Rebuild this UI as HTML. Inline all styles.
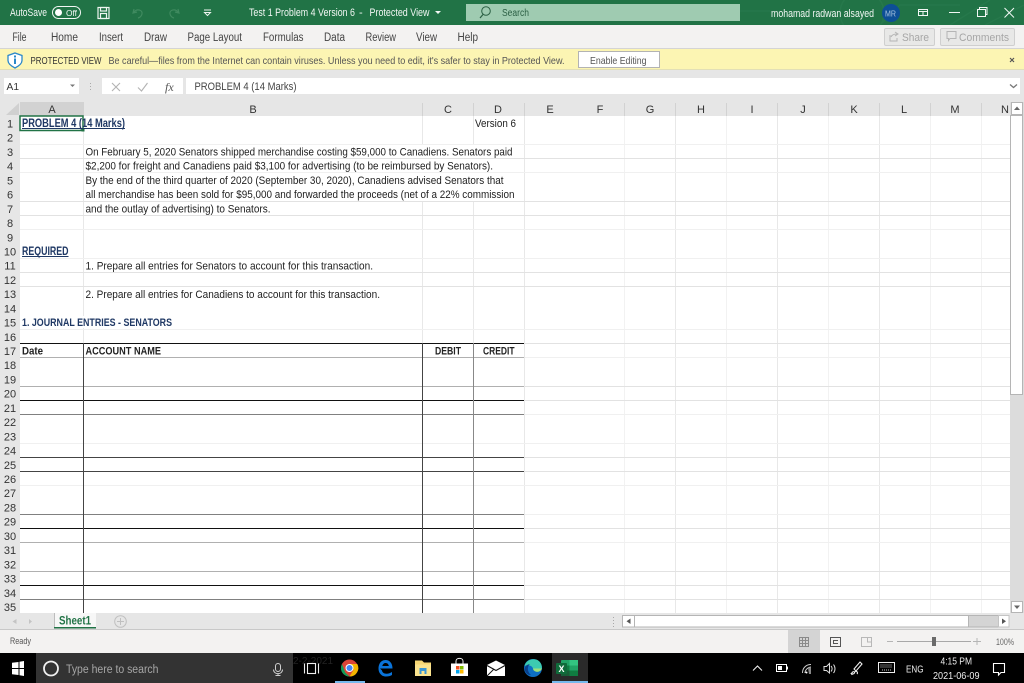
<!DOCTYPE html>
<html><head><meta charset="utf-8"><title>Excel</title>
<style>
html,body{margin:0;padding:0;width:1024px;height:683px;overflow:hidden;background:#fff}
svg{display:block;position:absolute;left:0;top:0;filter:blur(.35px)}
text{font-family:"Liberation Sans",sans-serif;font-size:11px;fill:#333}
.c{font-size:11px;fill:#333;text-anchor:middle}
.r{font-size:11px;fill:#333;text-anchor:middle}
.b{font-weight:bold}
.n{fill:#1f3864}
.k{fill:#222}
.w{fill:#f2f7f4}
</style></head><body>
<svg width="1024" height="683" viewBox="0 0 1024 683" xmlns="http://www.w3.org/2000/svg">
<!-- title bar -->
<rect width="1024" height="25" fill="#217346"/>
<g fill="none" stroke="#26784b" stroke-width="1.5">
<circle cx="862" cy="13" r="22"/><path d="M740 11H770M880 25L900 5H960M950 25L990 0M985 25L1024 5"/>
</g>
<rect x="466" y="4" width="274" height="17" fill="#9fcbb1"/>
<text x="10" y="16" class="w" textLength="37" lengthAdjust="spacingAndGlyphs">AutoSave</text>
<rect x="52.5" y="6.5" width="28" height="12" rx="6" fill="#217346" stroke="#f2f7f4"/>
<circle cx="58.5" cy="12.5" r="3.5" fill="#fff"/>
<text x="66" y="16" style="font-size:8.5px" class="w" textLength="11" lengthAdjust="spacingAndGlyphs">Off</text>
<g fill="none" stroke="#eef5f0" stroke-width="1.2"><rect x="98" y="7.5" width="11" height="11"/><rect x="100.5" y="7.5" width="6" height="3.5"/><rect x="100.5" y="13.5" width="6" height="5"/></g>
<g fill="none" stroke="#3f8a5f" stroke-width="1.2"><path d="M134 9L133 13L137 12M133.500 12.500C137 8 143 10 142 14C141.500 16 140 17.500 138 18"/><path d="M178 9L179 13L175 12M178.500 12.500C175 8 169 10 170 14C170.500 16 172 17.500 174 18"/></g>
<path d="M204 10H211" stroke="#eef5f0"/><path d="M204.500 12.500H210.500L207.500 15.500Z" fill="none" stroke="#eef5f0"/>
<text x="249" y="16" class="w" textLength="106" lengthAdjust="spacingAndGlyphs">Test 1 Problem 4 Version 6</text>
<text x="359" y="16" class="w">-</text>
<text x="369.500" y="16" class="w" textLength="60" lengthAdjust="spacingAndGlyphs">Protected View</text>
<path d="M435 11H441L438 14Z" fill="#f2f7f4"/>
<circle cx="486" cy="11" r="4.300" fill="none" stroke="#2a5f42" stroke-width="1"/><path d="M483 14.500L480 18" stroke="#2a5f42" stroke-width="1.200"/>
<text x="502" y="16" style="fill:#2b5f44;font-size:10px" textLength="27" lengthAdjust="spacingAndGlyphs">Search</text>
<text x="771" y="17" class="w" textLength="103" lengthAdjust="spacingAndGlyphs">mohamad radwan alsayed</text>
<circle cx="891" cy="13" r="9" fill="#0d4f96"/>
<text x="885" y="16.500" style="font-size:8.500px;fill:#a9c4de" textLength="11" lengthAdjust="spacingAndGlyphs">MR</text>
<g fill="none" stroke="#f2f7f4"><rect x="918.500" y="9.500" width="9" height="6"/><path d="M918 11.500H928M923 12V15"/><path d="M949 12.500H960"/><rect x="977.500" y="9.500" width="8" height="7"/><path d="M979.500 9V7.500H987V14.500H986"/><path d="M1004.500 8L1014 17.500M1014 8L1004.500 17.500"/></g>

<!-- ribbon tabs -->
<rect y="25" width="1024" height="24" fill="#f3f2f1"/>
<rect y="48" width="1024" height="1" fill="#d4d4d4"/>
<text x="12.500" y="41" style="fill:#444;font-size:11.500px" textLength="14" lengthAdjust="spacingAndGlyphs">File</text>
<text x="51" y="41" style="fill:#444;font-size:11.500px" textLength="27" lengthAdjust="spacingAndGlyphs">Home</text>
<text x="99" y="41" style="fill:#444;font-size:11.500px" textLength="24" lengthAdjust="spacingAndGlyphs">Insert</text>
<text x="144" y="41" style="fill:#444;font-size:11.500px" textLength="23" lengthAdjust="spacingAndGlyphs">Draw</text>
<text x="187.500" y="41" style="fill:#444;font-size:11.500px" textLength="54.500" lengthAdjust="spacingAndGlyphs">Page Layout</text>
<text x="263" y="41" style="fill:#444;font-size:11.500px" textLength="40.500" lengthAdjust="spacingAndGlyphs">Formulas</text>
<text x="324" y="41" style="fill:#444;font-size:11.500px" textLength="21" lengthAdjust="spacingAndGlyphs">Data</text>
<text x="365.500" y="41" style="fill:#444;font-size:11.500px" textLength="30.500" lengthAdjust="spacingAndGlyphs">Review</text>
<text x="416" y="41" style="fill:#444;font-size:11.500px" textLength="21" lengthAdjust="spacingAndGlyphs">View</text>
<text x="457.500" y="41" style="fill:#444;font-size:11.500px" textLength="20.500" lengthAdjust="spacingAndGlyphs">Help</text>
<rect x="884.500" y="28.500" width="50" height="17" rx="1.500" fill="#e8e8e7" stroke="#cfcfcf"/>
<rect x="940.500" y="28.500" width="74" height="17" rx="1.500" fill="#e8e8e7" stroke="#cfcfcf"/>
<g fill="none" stroke="#b5b5b5"><path d="M890 35V41H897V38M891 37C892 34.500 895 34 897 34M895 32L898 34L895 36"/><path d="M947 31.500H956V38.500H950L948.500 40.500V38.500H947Z"/></g>
<text x="902" y="41" style="fill:#a6a6a6;font-size:11px" textLength="27" lengthAdjust="spacingAndGlyphs">Share</text>
<text x="959" y="41" style="fill:#a6a6a6;font-size:11px" textLength="50" lengthAdjust="spacingAndGlyphs">Comments</text>

<!-- protected view bar -->
<rect y="49" width="1024" height="21" fill="#fcf5b3"/>
<rect y="69" width="1024" height="1" fill="#e2dfb6"/>
<path d="M15 53L22 55.500V60.500C22 63.500 19 66 15 68C11 66 8 63.500 8 60.500V55.500Z" fill="#fff" stroke="#2b88c9" stroke-width="1.300"/>
<rect x="14" y="58.500" width="2" height="5.500" fill="#2b88c9"/><rect x="14" y="55.500" width="2" height="2" fill="#2b88c9"/>
<text x="30.500" y="64" style="fill:#333;font-size:10.500px" textLength="71" lengthAdjust="spacingAndGlyphs">PROTECTED VIEW</text>
<text x="108.500" y="64" style="fill:#555;font-size:10.500px" textLength="456" lengthAdjust="spacingAndGlyphs">Be careful—files from the Internet can contain viruses. Unless you need to edit, it's safer to stay in Protected View.</text>
<rect x="578.500" y="51.500" width="81" height="16" fill="#fff" stroke="#b3b3b3"/>
<text x="590" y="64" style="fill:#555;font-size:10.500px" textLength="56.500" lengthAdjust="spacingAndGlyphs">Enable Editing</text>
<path d="M1010 58L1014 62M1014 58L1010 62" stroke="#555" stroke-width="1.200"/>

<!-- formula bar -->
<rect y="70" width="1024" height="46" fill="#e6e6e6"/>
<rect x="4" y="78" width="75" height="16" fill="#fff"/>
<rect x="102" y="78" width="81" height="16" fill="#fff"/>
<rect x="186" y="78" width="834" height="16" fill="#fff"/>
<text x="6.500" y="90" style="fill:#333;font-size:10.500px" textLength="12.500" lengthAdjust="spacingAndGlyphs">A1</text>
<path d="M70 84.500H75L72.500 87Z" fill="#777"/>
<path d="M90.500 83V84M90.500 86V87M90.500 89V90" stroke="#aaa"/>
<path d="M112 83L120 91M120 83L112 91" stroke="#b3b3b3" stroke-width="1.100"/>
<path d="M138 87.500L141.500 91L147.500 83" fill="none" stroke="#b3b3b3" stroke-width="1.100"/>
<text x="165" y="91" style="font-family:'Liberation Serif',serif;font-style:italic;fill:#555;font-size:12px">fx</text>
<text x="194.500" y="90" style="fill:#444;font-size:11px" textLength="102" lengthAdjust="spacingAndGlyphs">PROBLEM 4 (14 Marks)</text>
<path d="M1010 84.500L1013.500 87.500L1017 84.500" fill="none" stroke="#777" stroke-width="1.300"/>

<!-- column header -->
<rect y="102" width="1011" height="14" fill="#e6e6e6"/>
<rect x="20" y="102" width="64" height="14" fill="#d2d2d2"/>
<path d="M6 115L19 103V115Z" fill="#d0d0d0"/>
<path d="M422.500 103V116M473.500 103V116M524.500 103V116M624.500 103V116M675.500 103V116M726.500 103V116M777.500 103V116M828.500 103V116M879.500 103V116M930.500 103V116M981.500 103V116" stroke="#d2d2d2"/>
<text x="52" y="113" class="c">A</text><text x="253" y="113" class="c">B</text><text x="448" y="113" class="c">C</text><text x="498" y="113" class="c">D</text><text x="550" y="113" class="c">E</text><text x="600" y="113" class="c">F</text><text x="650" y="113" class="c">G</text><text x="701" y="113" class="c">H</text><text x="752" y="113" class="c">I</text><text x="803" y="113" class="c">J</text><text x="854" y="113" class="c">K</text><text x="904" y="113" class="c">L</text><text x="955" y="113" class="c">M</text><text x="1005" y="113" class="c">N</text>

<!-- row header -->
<rect y="116" width="20" height="497" fill="#e6e6e6"/>
<text x="10" y="127.500" class="r">1</text><text x="10" y="141.700" class="r">2</text><text x="10" y="156" class="r">3</text><text x="10" y="170.200" class="r">4</text><text x="10" y="184.400" class="r">5</text><text x="10" y="198.600" class="r">6</text><text x="10" y="212.800" class="r">7</text><text x="10" y="227" class="r">8</text><text x="10" y="241.300" class="r">9</text><text x="10" y="255.500" class="r">10</text><text x="10" y="269.700" class="r">11</text><text x="10" y="283.900" class="r">12</text><text x="10" y="298.100" class="r">13</text><text x="10" y="312.400" class="r">14</text><text x="10" y="326.600" class="r">15</text><text x="10" y="340.800" class="r">16</text><text x="10" y="355" class="r">17</text><text x="10" y="369.200" class="r">18</text><text x="10" y="383.500" class="r">19</text><text x="10" y="397.700" class="r">20</text><text x="10" y="411.900" class="r">21</text><text x="10" y="426.100" class="r">22</text><text x="10" y="440.300" class="r">23</text><text x="10" y="454.600" class="r">24</text><text x="10" y="468.800" class="r">25</text><text x="10" y="483" class="r">26</text><text x="10" y="497.200" class="r">27</text><text x="10" y="511.400" class="r">28</text><text x="10" y="525.700" class="r">29</text><text x="10" y="539.900" class="r">30</text><text x="10" y="554.100" class="r">31</text><text x="10" y="568.300" class="r">32</text><text x="10" y="582.500" class="r">33</text><text x="10" y="596.800" class="r">34</text><text x="10" y="611" class="r">35</text>

<!-- gridlines -->
<g shape-rendering="crispEdges">
<path d="M624.500 116V613M726.500 116V613M828.500 116V613M930.500 116V613M981.500 116V613" stroke="#f2f2f2"/>
<path d="M524.500 116V613M675.500 116V613M777.500 116V613M879.500 116V613" stroke="#e8e8e8"/>
<path d="M83.500 130V316M83.500 328V343M422.500 116V144M473.500 116V144M422.500 201V343M473.500 201V343" stroke="#e8e8e8"/>
<path d="M20 144.500H1011M20 172.500H1011M20 229.500H1011M20 258.500H1011M20 329.500H1011M525 357.500H1011M525 414.500H1011M20 443.500H1011M20 485.500H1011M525 514.500H1011M525 542.500H1011" stroke="#f0f0f0"/>
<path d="M20 158.500H1011M20 201.500H1011M20 215.500H1011M20 272.500H1011M20 286.500H1011M525 343.500H1011M525 386.500H1011M525 400.500H1011M525 457.500H1011M525 471.500H1011M525 528.500H1011M525 571.500H1011M525 585.500H1011M525 599.500H1011" stroke="#e2e2e2"/>
<!-- table -->
<path d="M20 357.500H524M20 386.500H524M20 542.500H524M20 571.500H524" stroke="#b0b0b0"/>
<path d="M20 414.500H524M20 514.500H524M20 599.500H524" stroke="#808080"/>
<path d="M20 343.500H524M20 400.500H524M20 528.500H524M20 585.500H524" stroke="#111"/>
<path d="M20 457.500H524M20 471.500H524" stroke="#444"/>
<path d="M83.500 343V613M422.500 343V613" stroke="#444"/>
<path d="M473.500 343V613" stroke="#888"/>
</g>

<!-- selection -->
<rect x="20" y="116" width="63" height="14.500" fill="none" stroke="#217346" stroke-width="1.500"/>
<rect x="81.500" y="128.500" width="3" height="3" fill="#217346"/>

<!-- cell text -->
<text x="22" y="127" class="b n" style="font-size:11.500px" textLength="103" lengthAdjust="spacingAndGlyphs">PROBLEM 4 (14 Marks)</text>
<rect x="22" y="128" width="103" height="1" fill="#1f3864"/>
<text x="475" y="127" class="k" textLength="41" lengthAdjust="spacingAndGlyphs">Version 6</text>
<text x="85.500" y="155.500" class="k" textLength="427" lengthAdjust="spacingAndGlyphs">On February 5, 2020 Senators shipped merchandise costing $59,000 to Canadiens.  Senators paid</text>
<text x="85.500" y="169.700" class="k" textLength="407.500" lengthAdjust="spacingAndGlyphs">$2,200 for freight and Canadiens paid $3,100 for advertising (to be reimbursed by Senators).</text>
<text x="85.500" y="184" class="k" textLength="418" lengthAdjust="spacingAndGlyphs">By the end of the third quarter of 2020 (September 30, 2020), Canadiens advised Senators that</text>
<text x="85.500" y="198.200" class="k" textLength="429" lengthAdjust="spacingAndGlyphs">all merchandise has been sold for $95,000 and forwarded the proceeds (net of a 22% commission</text>
<text x="85.500" y="212.400" class="k" textLength="185" lengthAdjust="spacingAndGlyphs">and the outlay of advertising) to Senators.</text>
<text x="22" y="255" class="b n" style="font-size:11.500px" textLength="46.500" lengthAdjust="spacingAndGlyphs">REQUIRED</text>
<rect x="22" y="256" width="46.500" height="1" fill="#1f3864"/>
<text x="85.500" y="269.300" class="k" textLength="287.500" lengthAdjust="spacingAndGlyphs">1.  Prepare all entries for Senators to account for this transaction.</text>
<text x="85.500" y="297.800" class="k" textLength="294.500" lengthAdjust="spacingAndGlyphs">2.  Prepare all entries for Canadiens to account for this transaction.</text>
<text x="22" y="326" class="b n" style="font-size:11px" textLength="150" lengthAdjust="spacingAndGlyphs">1. JOURNAL ENTRIES - SENATORS</text>
<text x="22" y="354.500" class="b k" textLength="21" lengthAdjust="spacingAndGlyphs">Date</text>
<text x="85.500" y="354.500" class="b k" textLength="75.500" lengthAdjust="spacingAndGlyphs">ACCOUNT NAME</text>
<text x="435" y="354.500" class="b k" textLength="26" lengthAdjust="spacingAndGlyphs">DEBIT</text>
<text x="483" y="354.500" class="b k" textLength="31.500" lengthAdjust="spacingAndGlyphs">CREDIT</text>

<!-- vertical scrollbar -->
<rect x="1010" y="102" width="14" height="511" fill="#dcdcdc"/>
<rect x="1010.500" y="115.500" width="12" height="279" fill="#fff" stroke="#b5b5b5"/>
<rect x="1011.500" y="102.500" width="11" height="12" fill="#fff" stroke="#b5b5b5"/>
<path d="M1014 110H1020L1017 106.500Z" fill="#666"/>
<rect x="1011.500" y="601.500" width="11" height="11" fill="#fff" stroke="#b5b5b5"/>
<path d="M1014 605.500H1020L1017 609Z" fill="#666"/>

<!-- sheet tabs -->
<rect y="613" width="1024" height="17" fill="#e6e6e6"/>
<rect y="629" width="1024" height="1" fill="#c8c8c8"/>
<rect x="54" y="613" width="42" height="15" fill="#f7f7f7"/>
<rect x="54" y="613" width="1" height="15" fill="#bdbdbd"/>
<rect x="54" y="627" width="42" height="1.500" fill="#217346"/>
<text x="59" y="624.500" class="b" style="fill:#217346;font-size:11.500px" textLength="32" lengthAdjust="spacingAndGlyphs">Sheet1</text>
<path d="M16.500 619L12.500 621.500L16.500 624Z" fill="#c4c4c4"/><path d="M29 619L32 621.500L29 624Z" fill="#c4c4c4"/>
<circle cx="120.500" cy="621.500" r="5.800" fill="none" stroke="#c0c0c0"/><path d="M117 621.500H124M120.500 618V625" stroke="#c0c0c0"/>
<path d="M613.500 617V618M613.500 620V621M613.500 623V624M613.500 626V627" stroke="#a8a8a8"/>
<rect x="622.500" y="615.500" width="386" height="11.500" fill="#d4d4d4" stroke="#b5b5b5"/>
<rect x="634.500" y="615.500" width="334" height="11.500" fill="#fff" stroke="#b5b5b5"/>
<rect x="622.500" y="615.500" width="12" height="11.500" fill="#fff" stroke="#b5b5b5"/>
<path d="M630.500 618.500V624L626.500 621.300Z" fill="#555"/>
<rect x="998.500" y="615.500" width="10.500" height="11.500" fill="#fff" stroke="#c4c4c4"/>
<path d="M1002 618.500V624L1006 621.300Z" fill="#555"/>

<!-- status bar -->
<rect y="630" width="1024" height="23" fill="#f3f2f1"/>
<text x="10" y="644" style="fill:#555;font-size:9.500px" textLength="21" lengthAdjust="spacingAndGlyphs">Ready</text>
<rect x="788" y="630" width="32" height="23" fill="#d4d4d4"/>
<g fill="none" stroke="#8a8a8a" shape-rendering="crispEdges"><rect x="799.500" y="637.500" width="9" height="9"/><path d="M802.500 637V647M805.500 637V647M799 640.500H809M799 643.500H809"/></g>
<g fill="none" stroke="#555" shape-rendering="crispEdges"><rect x="830.500" y="637.500" width="10" height="9"/><path d="M833 640.500H838M833 643.500H838M833.500 640V644"/></g>
<g fill="none" stroke="#b8b8b8" shape-rendering="crispEdges"><rect x="861.500" y="637.500" width="10" height="9"/><path d="M867.500 637V642H872"/></g>
<path d="M887 641.500H893M973 641.500H981M977 638V645" stroke="#b5b5b5"/>
<rect x="897" y="641" width="74" height="1" fill="#a8a8a8"/>
<rect x="932" y="637" width="4" height="9" fill="#6a6a6a"/>
<text x="996" y="645" style="fill:#666;font-size:9px" textLength="18" lengthAdjust="spacingAndGlyphs">100%</text>

<!-- taskbar -->
<rect y="653" width="1024" height="30" fill="#000"/>
<path d="M12 662.800L18.500 662V668H12ZM19.500 661.800L24 661V668H19.500ZM12 669H18.500V675L12 674.200ZM19.500 669H24V676L19.500 675.200Z" fill="#fff"/>
<rect x="36" y="653" width="257" height="30" fill="#333"/>
<circle cx="51" cy="668.500" r="7" fill="none" stroke="#f0f0f0" stroke-width="1.800"/>
<text x="66" y="673" style="fill:#a6a6a6;font-size:11.500px" textLength="92.500" lengthAdjust="spacingAndGlyphs">Type here to search</text>
<g fill="none" stroke="#cfcfcf"><rect x="275.500" y="663.500" width="5" height="8" rx="2.500"/><path d="M273.500 669.500C273.500 675 282.500 675 282.500 669.500M278 673.500V675M275.500 675.500H280.500"/></g>
<text x="293" y="664" style="fill:#222;font-size:10px" textLength="40" lengthAdjust="spacingAndGlyphs">2-2-2021</text>
<g fill="none" stroke="#eee" stroke-width="1.100"><rect x="307.500" y="663.500" width="8" height="10"/><path d="M305 664H304.500V673H305M318 664H318.500V673H318"/></g>
<!-- chrome -->
<circle cx="349.500" cy="668" r="8.500" fill="#db4437"/>
<path d="M342 664L345.200 672.500L349.500 676.500A8.500 8.500 0 0 1 341.200 666Z" fill="#0f9d58"/>
<path d="M349.500 664L357.300 664A8.500 8.500 0 0 1 349.500 676.500L353.500 670Z" fill="#f4b400"/>
<circle cx="349.500" cy="668" r="4" fill="#fff"/><circle cx="349.500" cy="668" r="3" fill="#4285f4"/>
<rect x="335" y="681" width="30" height="2" fill="#76b9ed"/>
<!-- edge legacy -->
<path d="M380 668.500H392.500C392.500 663 389.500 660 385.500 660C381 660 378.500 664 378.500 668.500C378.500 673.500 382 676.500 386 676.500C388.500 676.500 390.500 676 392 675V672C390.500 673 388.500 673.700 386.500 673.700C384 673.700 382.300 672.500 382 670.500" fill="#0a74da"/>
<path d="M382.300 666H388.800C388.500 664 387.200 663 385.500 663C384 663 382.700 664.200 382.300 666Z" fill="#000"/>
<!-- folder -->
<path d="M415 660.500H422L424 662.500H431V676H415Z" fill="#f7d774"/>
<rect x="415" y="664.500" width="16" height="11.500" fill="#fbe38e"/>
<rect x="419.500" y="668" width="7" height="6" fill="#3a96d4"/><rect x="421.500" y="671" width="3" height="5" fill="#fbe38e"/>
<!-- store -->
<path d="M451 663.500H468V676H451Z" fill="#fff"/>
<path d="M456 663.500V661C456 657.500 463 657.500 463 661V663.500" fill="none" stroke="#eee"/>
<rect x="456" y="666" width="3.500" height="3.500" fill="#f25022"/><rect x="460" y="666" width="3.500" height="3.500" fill="#7fba00"/><rect x="456" y="670" width="3.500" height="3.500" fill="#00a4ef"/><rect x="460" y="670" width="3.500" height="3.500" fill="#ffb900"/>
<!-- mail -->
<path d="M487 665L496 660.500L505 665V676H487Z" fill="#fff"/>
<path d="M487 665.500L496 670.500L505 665.500" fill="none" stroke="#111" stroke-width="1.200"/><path d="M487 676L494 669" stroke="#111"/>
<!-- edge new -->
<circle cx="533" cy="668" r="9" fill="#0d6fc4"/>
<path d="M524.500 666C526 660 532 658.500 536 659.500C540 660.500 542.500 665 541.800 669L533 668.500C532 665.500 528 664.500 524.500 666Z" fill="#3dcbb0"/>
<path d="M533 668.500H541.800C541.500 671 538 672.500 535.500 671.500C534 671 533 670 533 668.500Z" fill="#9ee07a"/>
<path d="M530 664C527 666 527 672 531 675C527.500 675.500 525 672 524.500 669C525 666 527 664.500 530 664Z" fill="#0a3f8a"/>
<!-- excel -->
<rect x="552" y="653" width="36" height="30" fill="#2a2a2a"/>
<rect x="552" y="681" width="36" height="2" fill="#76b9ed"/>
<rect x="561" y="660" width="17" height="16" rx="1" fill="#21a366"/>
<rect x="569.500" y="660" width="8.500" height="5.500" fill="#33c481"/>
<rect x="569.500" y="670.500" width="8.500" height="5.500" fill="#107c41"/>
<rect x="561" y="670.500" width="8.500" height="5.500" fill="#185c37"/>
<rect x="561" y="665.500" width="8.500" height="5" fill="#107c41"/>
<rect x="556" y="663" width="11" height="11" rx="1" fill="#0f6b3a"/>
<text x="561.500" y="672" style="fill:#fff;font-size:9px;font-weight:bold;text-anchor:middle">X</text>
<!-- tray -->
<path d="M753 670.500L757.500 666L762 670.500" fill="none" stroke="#eee" stroke-width="1.100"/>
<rect x="776.500" y="664.500" width="10" height="7" fill="none" stroke="#fff"/><rect x="778" y="666" width="4" height="4" fill="#fff"/><rect x="787" y="666.500" width="1" height="3" fill="#fff"/>
<g fill="none" stroke="#ccc"><path d="M802.500 673C802.500 668 806 664.500 811 664.500M805 673C805 670 807.500 667.500 811 667"/></g>
<path d="M808 668L809 674H811V667Z" fill="#888"/><circle cx="806.500" cy="672.500" r="1" fill="#fff"/>
<g fill="none" stroke="#ddd"><path d="M824 666.500H826.500L829.500 663.500V673L826.500 670.500H824Z"/><path d="M831 666C832.500 667.500 832.500 670 831 671.500M833.500 664.500C835.500 667 835.500 670.500 833.500 673"/></g>
<g fill="none" stroke="#eee" stroke-width="1.100"><path d="M854 669L860 662L862 664L856 671Z"/><path d="M852 675C851 672 854 671 854.500 672C855 674 851 675 851 673M855 672C857 670 858 673 857 674"/></g>
<rect x="878.500" y="662.500" width="16" height="10" fill="none" stroke="#eee"/><path d="M880.500 665H892.500M880.500 667H892.500M882 670H891" stroke="#cfcfcf" stroke-dasharray="1 1"/>
<text x="906" y="672.500" style="fill:#eee;font-size:10.500px" textLength="17.500" lengthAdjust="spacingAndGlyphs">ENG</text>
<text x="940.500" y="664.500" style="fill:#eee;font-size:10.500px" textLength="31.500" lengthAdjust="spacingAndGlyphs">4:15 PM</text>
<text x="933" y="679" style="fill:#eee;font-size:10.500px" textLength="46.500" lengthAdjust="spacingAndGlyphs">2021-06-09</text>
<path d="M993.500 663.500H1004.500V672.500H1001L998.500 675V672.500H993.500Z" fill="none" stroke="#fff" stroke-width="1.100"/>
</svg>
</body></html>
